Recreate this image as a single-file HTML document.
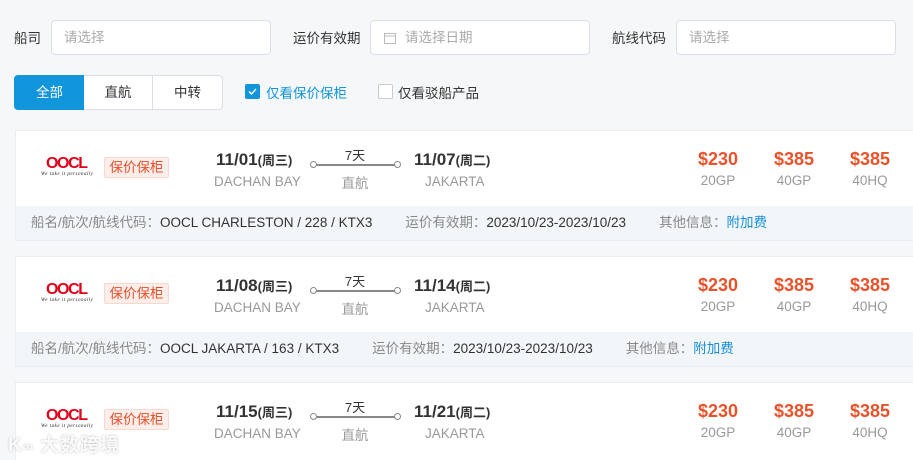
<!DOCTYPE html>
<html><head><meta charset="utf-8"><style>
*{box-sizing:border-box;margin:0;padding:0}
html,body{width:913px;height:460px;overflow:hidden}
body{background:#f6f7f8;font-family:"Liberation Sans","Noto Sans CJK SC",sans-serif;font-size:13px;color:#333;position:relative}
.abs{position:absolute}
.lbl{font-size:13.5px;color:#333;top:27px}
.inp{top:20px;height:35px;background:#fff;border:1px solid #dcdfe6;border-radius:4px;color:#aaa;font-size:13.5px;line-height:33px;padding-left:12px}
.btn{top:75px;height:35px;border:1px solid #dcdfe6;background:#fff;line-height:33px;text-align:center;font-size:13.5px;color:#333}
.card{left:15px;width:910px;height:111px;background:#fff;border:1px solid #ebeef0;overflow:hidden}
.foot{position:absolute;left:0;right:0;top:75px;height:34px;background:#f2f6f9;line-height:34px;padding-left:15px;font-size:13.5px;color:#888;white-space:nowrap}
.foot b{font-weight:normal;color:#333}
.foot span{margin-right:33px}
.foot a{color:#1890d8;text-decoration:none}
.logo{left:22px;top:22px;width:58px;height:26px}
.tag{left:88px;top:26px;width:65px;height:21px;background:#fdeeea;border:1px solid #f8d8cf;color:#e2502c;font-size:13.5px;line-height:19px;text-align:center;border-radius:2px}
.d{font-size:17px;font-weight:bold;color:#333;top:19px}
.d small{font-size:13px;font-weight:bold}
.p{font-size:13.5px;color:#999;top:43px}
.pr{font-size:18px;font-weight:bold;color:#e8532b;top:18px;width:70px;text-align:center}
.ct{font-size:13.5px;color:#999;top:42px;width:70px;text-align:center}
</style></head><body>
<div class="abs lbl" style="left:14px">船司</div>
<div class="abs inp" style="left:51px;width:220px">请选择</div>
<div class="abs lbl" style="left:293px">运价有效期</div>
<div class="abs inp" style="left:370px;width:220px;padding-left:34px"><svg class="abs" style="left:13px;top:11px" width="12" height="12" viewBox="0 0 12 12"><rect x="0.5" y="1.5" width="11" height="10" fill="none" stroke="#bbb"/><line x1="0" y1="4" x2="12" y2="4" stroke="#bbb"/></svg>请选择日期</div>
<div class="abs lbl" style="left:612px">航线代码</div>
<div class="abs inp" style="left:676px;width:220px">请选择</div>
<div class="abs btn" style="left:14px;width:71px;background:#1296db;border-color:#1296db;color:#fff;border-radius:4px 0 0 4px">全部</div>
<div class="abs btn" style="left:84px;width:69px;border-left:none">直航</div>
<div class="abs btn" style="left:152px;width:71px;border-radius:0 4px 4px 0">中转</div>
<div class="abs" style="left:245px;top:84px;width:15px;height:15px;background:#1296db;border-radius:2px"><svg width="15" height="15"><path d="M4 7.5l2.5 2.5 4.5-5" stroke="#fff" stroke-width="1.4" fill="none"/></svg></div>
<div class="abs" style="left:266px;top:82px;color:#1296db;font-size:13.5px">仅看保价保柜</div>
<div class="abs" style="left:378px;top:84px;width:15px;height:15px;background:#fff;border:1px solid #ccc;border-radius:2px"></div>
<div class="abs" style="left:398px;top:82px;color:#333;font-size:13.5px">仅看驳船产品</div>

<div class="abs card" style="top:130px">
 <svg class="abs logo" viewBox="0 0 58 26"><text x="29" y="15" text-anchor="middle" font-family="Liberation Sans" font-weight="bold" font-size="16" fill="#e0001a" textLength="42">OOCL</text><text x="29" y="22" text-anchor="middle" font-family="Liberation Serif" font-style="italic" font-size="5" fill="#222" textLength="52">We take it personally</text></svg>
 <div class="abs tag">保价保柜</div>
 <div class="abs d" style="left:200px">11/01<small>(周三)</small></div><div class="abs p" style="left:198px">DACHAN BAY</div>
 <div class="abs" style="left:296px;top:14px;width:86px;text-align:center;font-size:13px">7天</div>
 <div class="abs" style="left:297px;top:33px;width:84px;height:2px;background:#888"></div>
 <div class="abs" style="left:294px;top:30px;width:7px;height:7px;border:1px solid #888;border-radius:50%;background:#fff"></div>
 <div class="abs" style="left:378px;top:30px;width:7px;height:7px;border:1px solid #888;border-radius:50%;background:#fff"></div>
 <div class="abs p" style="left:296px;top:41px;width:86px;text-align:center">直航</div>
 <div class="abs d" style="left:398px">11/07<small>(周二)</small></div><div class="abs p" style="left:409px">JAKARTA</div>
 <div class="abs pr" style="left:667px">$230</div><div class="abs ct" style="left:667px">20GP</div>
 <div class="abs pr" style="left:743px">$385</div><div class="abs ct" style="left:743px">40GP</div>
 <div class="abs pr" style="left:819px">$385</div><div class="abs ct" style="left:819px">40HQ</div>
 <div class="foot"><span>船名/航次/航线代码：<b>OOCL CHARLESTON / 228 / KTX3</b></span><span>运价有效期：<b>2023/10/23-2023/10/23</b></span><span>其他信息：<a>附加费</a></span></div>
</div>

<div class="abs card" style="top:256px">
 <svg class="abs logo" viewBox="0 0 58 26"><text x="29" y="15" text-anchor="middle" font-family="Liberation Sans" font-weight="bold" font-size="16" fill="#e0001a" textLength="42">OOCL</text><text x="29" y="22" text-anchor="middle" font-family="Liberation Serif" font-style="italic" font-size="5" fill="#222" textLength="52">We take it personally</text></svg>
 <div class="abs tag">保价保柜</div>
 <div class="abs d" style="left:200px">11/08<small>(周三)</small></div><div class="abs p" style="left:198px">DACHAN BAY</div>
 <div class="abs" style="left:296px;top:14px;width:86px;text-align:center;font-size:13px">7天</div>
 <div class="abs" style="left:297px;top:33px;width:84px;height:2px;background:#888"></div>
 <div class="abs" style="left:294px;top:30px;width:7px;height:7px;border:1px solid #888;border-radius:50%;background:#fff"></div>
 <div class="abs" style="left:378px;top:30px;width:7px;height:7px;border:1px solid #888;border-radius:50%;background:#fff"></div>
 <div class="abs p" style="left:296px;top:41px;width:86px;text-align:center">直航</div>
 <div class="abs d" style="left:398px">11/14<small>(周二)</small></div><div class="abs p" style="left:409px">JAKARTA</div>
 <div class="abs pr" style="left:667px">$230</div><div class="abs ct" style="left:667px">20GP</div>
 <div class="abs pr" style="left:743px">$385</div><div class="abs ct" style="left:743px">40GP</div>
 <div class="abs pr" style="left:819px">$385</div><div class="abs ct" style="left:819px">40HQ</div>
 <div class="foot"><span>船名/航次/航线代码：<b>OOCL JAKARTA / 163 / KTX3</b></span><span>运价有效期：<b>2023/10/23-2023/10/23</b></span><span>其他信息：<a>附加费</a></span></div>
</div>

<div class="abs card" style="top:382px;height:78px;border-bottom:none">
 <svg class="abs logo" viewBox="0 0 58 26"><text x="29" y="15" text-anchor="middle" font-family="Liberation Sans" font-weight="bold" font-size="16" fill="#e0001a" textLength="42">OOCL</text><text x="29" y="22" text-anchor="middle" font-family="Liberation Serif" font-style="italic" font-size="5" fill="#222" textLength="52">We take it personally</text></svg>
 <div class="abs tag">保价保柜</div>
 <div class="abs d" style="left:200px">11/15<small>(周三)</small></div><div class="abs p" style="left:198px">DACHAN BAY</div>
 <div class="abs" style="left:296px;top:14px;width:86px;text-align:center;font-size:13px">7天</div>
 <div class="abs" style="left:297px;top:33px;width:84px;height:2px;background:#888"></div>
 <div class="abs" style="left:294px;top:30px;width:7px;height:7px;border:1px solid #888;border-radius:50%;background:#fff"></div>
 <div class="abs" style="left:378px;top:30px;width:7px;height:7px;border:1px solid #888;border-radius:50%;background:#fff"></div>
 <div class="abs p" style="left:296px;top:41px;width:86px;text-align:center">直航</div>
 <div class="abs d" style="left:398px">11/21<small>(周二)</small></div><div class="abs p" style="left:409px">JAKARTA</div>
 <div class="abs pr" style="left:667px">$230</div><div class="abs ct" style="left:667px">20GP</div>
 <div class="abs pr" style="left:743px">$385</div><div class="abs ct" style="left:743px">40GP</div>
 <div class="abs pr" style="left:819px">$385</div><div class="abs ct" style="left:819px">40HQ</div>
</div>
<div class="abs" style="left:8px;top:430px;font-size:19px;font-weight:bold;color:rgba(255,255,255,0.9);text-shadow:0 0 2px #bbb;letter-spacing:1px">K<span style="font-size:14px">∞</span> 大数跨境</div>
</body></html>
